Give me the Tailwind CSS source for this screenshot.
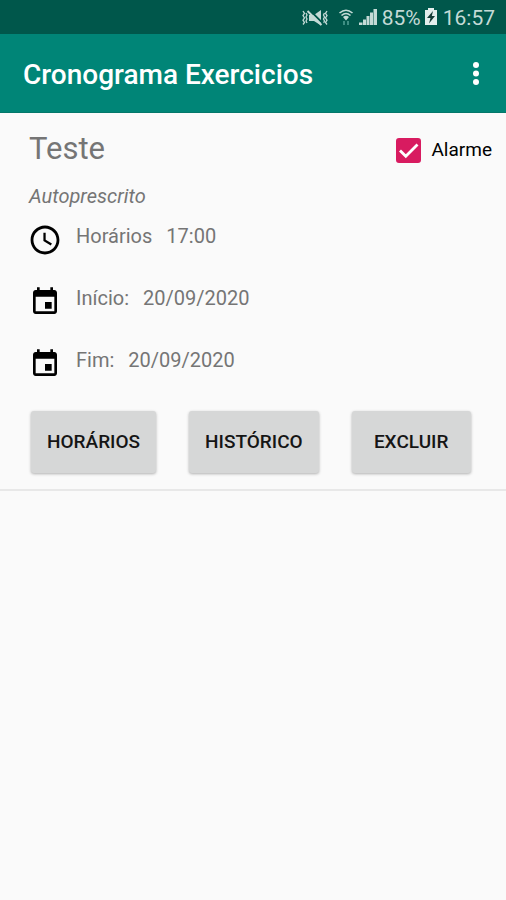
<!DOCTYPE html>
<html lang="pt-BR">
<head>
<meta charset="utf-8">
<meta name="viewport" content="width=device-width, initial-scale=1">
<title>Cronograma Exercicios</title>
<script src="https://cdn.jsdelivr.net/npm/@tailwindcss/browser@4"></script>
</head>
<body class="min-h-screen bg-[#fafafa] font-['Roboto',sans-serif] text-[20px] leading-6 text-[#757575]">
  <div class="flex h-[34px] items-center justify-end bg-[#00574b] pt-[2px] pr-[11px] text-[21px] text-[#c4dad6]">
    <svg class="mr-2 h-5 w-7" viewBox="0 0 28 20" fill="none" stroke="currentColor" stroke-width="1.300" aria-hidden="true">
      <path d="M2 3l1.500 2.300L2 7.600l1.500 2.300L2 12.200l1.500 2.300L2 16.500M5 5l1 2-1 2 1 2-1 2 1 2M26 3l-1.500 2.300L26 7.600l-1.500 2.300 1.500 2.300-1.500 2.300 1.500 2M23.500 5l-1 2 1 2-1 2 1 2-1 2"/>
      <path d="M8 7h5l7-5v15.500L13 13H8z" fill="currentColor" stroke="none"/>
      <path d="M8 1.500l14 14" stroke="#00574b" stroke-width="1.800"/>
      <path d="M6.500 3l14 14" stroke-width="2"/>
    </svg>
    <svg class="mr-1 h-5 w-[18px]" viewBox="0 0 18 20" fill="none" stroke="currentColor" stroke-width="1.600" aria-hidden="true">
      <path d="M2.500 5Q9-.5 15.500 5M4.500 7.500Q9 3.500 13.500 7.500"/>
      <path d="M6 9Q9 6.500 12 9L9 12.500z" fill="currentColor" stroke="none"/>
      <path d="M7 13v4M11 13v4" stroke="#4f9d92"/>
    </svg>
    <svg class="mr-[5px] h-5 w-[18px]" viewBox="0 0 18 20" fill="currentColor" aria-hidden="true">
      <path d="M0 14.500h3.500V17H0zM4 11.500h3V17H4zM7.500 8h3v9h-3zM11 4.500h3V17h-3zM14.500 1H18v16h-3.500z"/>
    </svg>
    <span>85%</span>
    <svg class="mr-[6px] ml-1 h-5 w-3" viewBox="0 0 12 20" aria-hidden="true">
      <path d="M0 2h3V0h6v2h3v15H0z" fill="#e4efed"/>
      <path d="M8 3L2 10h3.500L4 15.500 10 8H6.800z" fill="#153c36"/>
    </svg>
    <span>16:57</span>
  </div>

  <header class="flex h-[79px] items-center justify-between border-b border-[#04776a] bg-[#008577] pr-4 pl-[23px] text-white">
    <h1 class="pt-1 text-[28px] leading-8 font-medium">Cronograma Exercicios</h1>
    <button type="button" aria-label="Mais opções" class="flex h-10 w-7 items-center justify-center">
      <svg class="h-6 w-2" viewBox="0 0 8 24" fill="currentColor" aria-hidden="true"><circle cx="4" cy="4" r="3"/><circle cx="4" cy="12.500" r="3"/><circle cx="4" cy="21" r="3"/></svg>
    </button>
  </header>

  <main>
    <article class="border-b-2 border-[#e8e8e8] pb-4">
      <div class="flex items-center justify-between pt-4 pr-[14px] pl-[29px]">
        <h2 class="text-[31px] leading-10">Teste</h2>
        <label class="flex items-center gap-[10px] pt-[2px] text-[19px] text-black">
          <span class="grid">
            <input type="checkbox" checked class="peer col-start-1 row-start-1 h-[25px] w-[25px] appearance-none rounded-[3px] border-2 border-[#757575] checked:border-[#d81b60] checked:bg-[#d81b60]">
            <svg class="pointer-events-none invisible col-start-1 row-start-1 h-[25px] w-[25px] peer-checked:visible" viewBox="0 0 25 25" fill="none" stroke="#fff" stroke-width="2.800" aria-hidden="true"><path d="M4 12.500l5.800 5.800L21.500 6.500"/></svg>
          </span>
          Alarme
        </label>
      </div>
      <p class="mt-[15px] pl-[29px] italic">Autoprescrito</p>
      <dl class="mt-4 flex flex-col gap-[30px] pl-[29px]">
        <div class="flex h-8 items-start">
          <svg class="mr-[15px] h-8 w-8" viewBox="0 0 24 24" fill="#000" aria-hidden="true"><path d="M11.990 1.200C6 1.200 1.200 6 1.200 12S6 22.800 11.990 22.800C18 22.800 22.800 18 22.800 12S18 1.200 11.990 1.200zM12 20.700c-4.800 0-8.700-3.900-8.700-8.700S7.200 3.300 12 3.300s8.700 3.900 8.700 8.700-3.900 8.700-8.700 8.700zm.5-14.100h-1.700v6.200l5.500 3.300.9-1.400-4.700-2.800z"/></svg>
          <dt class="mr-[14px]">Horários</dt><dd>17:00</dd>
        </div>
        <div class="flex h-8 items-start">
          <svg class="mr-[15px] h-8 w-8" viewBox="0 0 24 24" fill="#000" aria-hidden="true"><path d="M17 12h-5v5h5v-5zM16 1v2H8V1H6v2H5c-1.110 0-1.990.9-1.990 2L3 19c0 1.100.89 2 2 2h14c1.100 0 2-.9 2-2V5c0-1.100-.9-2-2-2h-1V1h-2zm3 18H5V8h14v11z"/></svg>
          <dt class="mr-[14px]">Início:</dt><dd>20/09/2020</dd>
        </div>
        <div class="flex h-8 items-start">
          <svg class="mr-[15px] h-8 w-8" viewBox="0 0 24 24" fill="#000" aria-hidden="true"><path d="M17 12h-5v5h5v-5zM16 1v2H8V1H6v2H5c-1.110 0-1.990.9-1.990 2L3 19c0 1.100.89 2 2 2h14c1.100 0 2-.9 2-2V5c0-1.100-.9-2-2-2h-1V1h-2zm3 18H5V8h14v11z"/></svg>
          <dt class="mr-[14px]">Fim:</dt><dd>20/09/2020</dd>
        </div>
      </dl>
      <div class="mt-[31px] flex gap-[33px] pl-[31px] text-[19px] font-medium text-[#151515]">
        <button type="button" class="h-[62px] rounded-[3px] bg-[#d6d7d7] px-4 shadow-[0_1px_3px_#0000004d]">HORÁRIOS</button>
        <button type="button" class="h-[62px] rounded-[3px] bg-[#d6d7d7] px-4 shadow-[0_1px_3px_#0000004d]">HISTÓRICO</button>
        <button type="button" class="h-[62px] min-w-[119px] rounded-[3px] bg-[#d6d7d7] px-4 shadow-[0_1px_3px_#0000004d]">EXCLUIR</button>
      </div>
    </article>
  </main>
</body>
</html>
